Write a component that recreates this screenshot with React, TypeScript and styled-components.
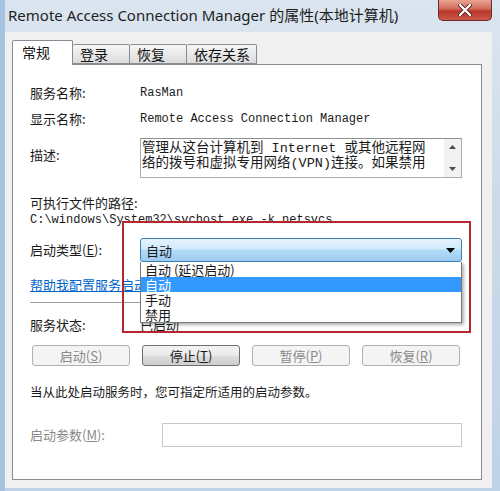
import styled, { createGlobalStyle } from "styled-components";

const GlobalStyle = createGlobalStyle`
  html, body {
    margin: 0;
    padding: 0;
  }
  body {
    width: 500px;
    height: 491px;
    overflow: hidden;
    background: #bcd0e6;
    font-family: "Noto Sans CJK SC", "Noto Sans", sans-serif;
    color: #1a1a1a;
  }
`;

const Ventana = styled.div`
  width: 500px;
  height: 491px;
  display: flex;
  flex-direction: column;
  background: linear-gradient(180deg, #dbe5ef 0%, #cddbe9 40%, #bfd2e6 100%);
  box-shadow: inset 5px 0 0 #a8c3e2;
`;

const BarraTitulo = styled.div`
  height: 32px;
  flex: none;
  display: flex;
  justify-content: space-between;
  align-items: flex-start;
`;

const Titulo = styled.div`
  padding: 5px 0 0 8px;
  font-family: "Noto Sans", "Noto Sans CJK SC", sans-serif;
  font-size: 15px;
  line-height: 20px;
  color: #1e1e1e;
  white-space: nowrap;
`;

const Cerrar = styled.div`
  width: 54px;
  height: 21px;
  margin-right: 8px;
  box-sizing: border-box;
  border: 1px solid #6d2a2a;
  border-top: none;
  border-radius: 0 0 5px 5px;
  background: linear-gradient(180deg, #e8a393 0%, #d36a5a 45%, #b8372b 55%, #c9584a 100%);
  display: flex;
  align-items: center;
  justify-content: center;
`;

const Cliente = styled.div`
  flex: 1;
  margin: 0 8px 3px 5px;
  background: #f0f0f0;
  padding: 8px 10px 8px 7px;
  display: flex;
  flex-direction: column;
`;

const Pestanas = styled.div`
  height: 24px;
  display: flex;
  align-items: flex-end;
  position: relative;
  z-index: 2;
`;

const Pestana = styled.div<{ $w: number; $activa?: boolean }>`
  width: ${(p) => p.$w}px;
  height: ${(p) => (p.$activa ? 25 : 20)}px;
  margin-bottom: ${(p) => (p.$activa ? -1 : 0)}px;
  box-sizing: border-box;
  border: 1px solid #898c95;
  border-bottom: ${(p) => (p.$activa ? "none" : "1px solid #898c95")};
  border-left: ${(p) => (p.$activa ? "1px solid #898c95" : "none")};
  border-radius: 2px 2px 0 0;
  background: ${(p) =>
    p.$activa ? "#ffffff" : "linear-gradient(180deg, #f6f6f6 0%, #e9e9e9 50%, #dcdcdc 100%)"};
  font-size: 14px;
  line-height: ${(p) => (p.$activa ? 22 : 18)}px;
  padding-left: ${(p) => (p.$activa ? 9 : 7)}px;
  color: #111;
`;

const Panel = styled.div`
  flex: 1;
  position: relative;
  background: #ffffff;
  border: 1px solid #898c95;
  padding: 18px 0 0 17px;
  display: flex;
  flex-direction: column;
`;

const Fila = styled.div<{ $mt?: number; $h: number }>`
  display: flex;
  align-items: center;
  margin-top: ${(p) => p.$mt ?? 0}px;
  height: ${(p) => p.$h}px;
  flex: none;
`;

const Etiqueta = styled.div<{ $w?: number; $gris?: boolean }>`
  width: ${(p) => p.$w ?? 110}px;
  flex: none;
  font-size: 13px;
  line-height: 16px;
  white-space: nowrap;
  color: ${(p) => (p.$gris ? "#8a8a8a" : "#1a1a1a")};
`;

const EtiquetaArriba = styled(Etiqueta)`
  align-self: flex-start;
  margin-top: 9px;
`;

const Mono = styled.div`
  font-family: "Liberation Mono", "Noto Sans CJK SC", monospace;
  font-size: 12px;
  line-height: 16px;
  white-space: nowrap;
  color: #1a1a1a;
`;

const Texto = styled.div<{ $size?: number }>`
  font-size: ${(p) => p.$size ?? 13}px;
  line-height: 16px;
  white-space: nowrap;
  color: #1a1a1a;
`;

const CajaDescripcion = styled.div`
  width: 322px;
  height: 40px;
  box-sizing: border-box;
  border: 1px solid #abadb3;
  border-top-color: #8e8f8f;
  display: flex;
`;

const TextoDescripcion = styled.div`
  flex: 1;
  padding: 2px 0 0 1px;
  font-family: "Liberation Mono", "Noto Sans CJK SC", monospace;
  font-size: 13.5px;
  line-height: 15px;
  overflow: hidden;
  white-space: nowrap;
  color: #1a1a1a;
`;

const BarraDesplazamiento = styled.div`
  width: 17px;
  background: #f2f2f2;
  display: flex;
  flex-direction: column;
  justify-content: space-between;
  align-items: center;
  padding: 6px 0 6px;
`;

const Combo = styled.div`
  width: 322px;
  height: 24px;
  box-sizing: border-box;
  position: relative;
  border: 1px solid #3c7fb1;
  border-radius: 3px;
  background: linear-gradient(180deg, #e4f2fd 0%, #d2ebfc 45%, #b4dcf8 50%, #9ccbf1 100%);
  display: flex;
  align-items: center;
  justify-content: space-between;
  padding: 0 6px 0 5px;
  font-size: 13px;
  z-index: 3;
`;

const Lista = styled.div`
  position: absolute;
  top: 23px;
  left: -1px;
  width: 322px;
  height: 61px;
  box-sizing: border-box;
  background: #ffffff;
  border: 1px solid #7a7a7a;
  border-top: none;
  box-shadow: 2px 2px 3px rgba(0, 0, 0, 0.3);
`;

const Opcion = styled.div<{ $sel?: boolean }>`
  height: 15px;
  line-height: 15px;
  font-size: 13px;
  padding-left: 4px;
  background: ${(p) => (p.$sel ? "#3399ff" : "transparent")};
  color: ${(p) => (p.$sel ? "#ffffff" : "#1a1a1a")};
`;

const Enlace = styled.div`
  font-size: 13px;
  line-height: 16px;
  color: #0066cc;
  text-decoration: underline;
  white-space: nowrap;
`;

const Separador = styled.div`
  width: 432px;
  height: 1px;
  margin-top: 9px;
  background: #a0a0a0;
  flex: none;
`;

const Botones = styled.div`
  display: flex;
  gap: 12px;
  margin: 11px 0 0 2px;
  height: 21px;
  flex: none;
`;

const Boton = styled.div<{ $activo?: boolean }>`
  width: 98px;
  height: 21px;
  box-sizing: border-box;
  border: 1px solid ${(p) => (p.$activo ? "#707070" : "#adb2b5")};
  border-radius: 3px;
  background: ${(p) =>
    p.$activo
      ? "linear-gradient(180deg, #f2f2f2 0%, #ebebeb 48%, #dddddd 52%, #cfcfcf 100%)"
      : "#f4f4f4"};
  color: ${(p) => (p.$activo ? "#1a1a1a" : "#8a8a8a")};
  font-size: 13px;
  line-height: 19px;
  text-align: center;
`;

const CampoTexto = styled.div`
  width: 300px;
  height: 24px;
  box-sizing: border-box;
  border: 1px solid #c6c6c6;
  background: #ffffff;
`;

const MarcoRojo = styled.div`
  position: absolute;
  left: 109px;
  top: 156px;
  width: 349px;
  height: 112px;
  box-sizing: border-box;
  border: 2px solid #b5262d;
  z-index: 4;
  pointer-events: none;
`;

const Flecha = ({ arriba }: { arriba?: boolean }) => (
  <svg width="7" height="4" viewBox="0 0 7 4">
    <path d={arriba ? "M0 4 L3.5 0 L7 4 Z" : "M0 0 L3.5 4 L7 0 Z"} fill="#4d4d4d" />
  </svg>
);

export default function App() {
  return (
    <Ventana>
      <GlobalStyle />
      <BarraTitulo>
        <Titulo>Remote Access Connection Manager 的属性(本地计算机)</Titulo>
        <Cerrar>
          <svg width="14" height="12" viewBox="0 0 14 12">
            <path d="M2 1 L12 11 M12 1 L2 11" stroke="#5a1a1a" strokeWidth="4" strokeLinecap="round" />
            <path d="M2 1 L12 11 M12 1 L2 11" stroke="#ffffff" strokeWidth="2.4" strokeLinecap="round" />
          </svg>
        </Cerrar>
      </BarraTitulo>
      <Cliente>
        <Pestanas>
          <Pestana $w={61} $activa>常规</Pestana>
          <Pestana $w={57}>登录</Pestana>
          <Pestana $w={57}>恢复</Pestana>
          <Pestana $w={70}>依存关系</Pestana>
        </Pestanas>
        <Panel>
          <Fila $h={20}>
            <Etiqueta>服务名称:</Etiqueta>
            <Mono>RasMan</Mono>
          </Fila>
          <Fila $mt={6} $h={20}>
            <Etiqueta>显示名称:</Etiqueta>
            <Mono>Remote Access Connection Manager</Mono>
          </Fila>
          <Fila $mt={9} $h={40}>
            <EtiquetaArriba>描述:</EtiquetaArriba>
            <CajaDescripcion>
              <TextoDescripcion>
                <div>管理从这台计算机到 Internet 或其他远程网</div>
                <div>络的拨号和虚拟专用网络(VPN)连接。如果禁用</div>
              </TextoDescripcion>
              <BarraDesplazamiento>
                <Flecha arriba />
                <Flecha />
              </BarraDesplazamiento>
            </CajaDescripcion>
          </Fila>
          <Fila $mt={16} $h={18}>
            <Etiqueta $w={200}>可执行文件的路径:</Etiqueta>
          </Fila>
          <Fila $h={16}>
            <Mono>C:\windows\System32\svchost.exe -k netsvcs</Mono>
          </Fila>
          <Fila $mt={10} $h={24}>
            <Etiqueta>
              启动类型(<u>E</u>):
            </Etiqueta>
            <Combo>
              <span>自动</span>
              <svg width="9" height="5" viewBox="0 0 9 5">
                <path d="M0 0 L9 0 L4.5 5 Z" fill="#000" />
              </svg>
              <Lista>
                <Opcion>自动 (延迟启动)</Opcion>
                <Opcion $sel>自动</Opcion>
                <Opcion>手动</Opcion>
                <Opcion>禁用</Opcion>
              </Lista>
            </Combo>
          </Fila>
          <Fila $mt={15} $h={16}>
            <Enlace>帮助我配置服务启动选项。</Enlace>
          </Fila>
          <Separador />
          <Fila $mt={13} $h={18}>
            <Etiqueta>服务状态:</Etiqueta>
            <Texto>已启动</Texto>
          </Fila>
          <Botones>
            <Boton>
              启动(<u>S</u>)
            </Boton>
            <Boton $activo>
              停止(<u>T</u>)
            </Boton>
            <Boton>
              暂停(<u>P</u>)
            </Boton>
            <Boton>
              恢复(<u>R</u>)
            </Boton>
          </Botones>
          <Fila $mt={17} $h={18}>
            <Texto $size={12.5}>当从此处启动服务时，您可指定所适用的启动参数。</Texto>
          </Fila>
          <Fila $mt={22} $h={24}>
            <Etiqueta $w={132} $gris>
              启动参数(<u>M</u>):
            </Etiqueta>
            <CampoTexto />
          </Fila>
          <MarcoRojo />
        </Panel>
      </Cliente>
    </Ventana>
  );
}
